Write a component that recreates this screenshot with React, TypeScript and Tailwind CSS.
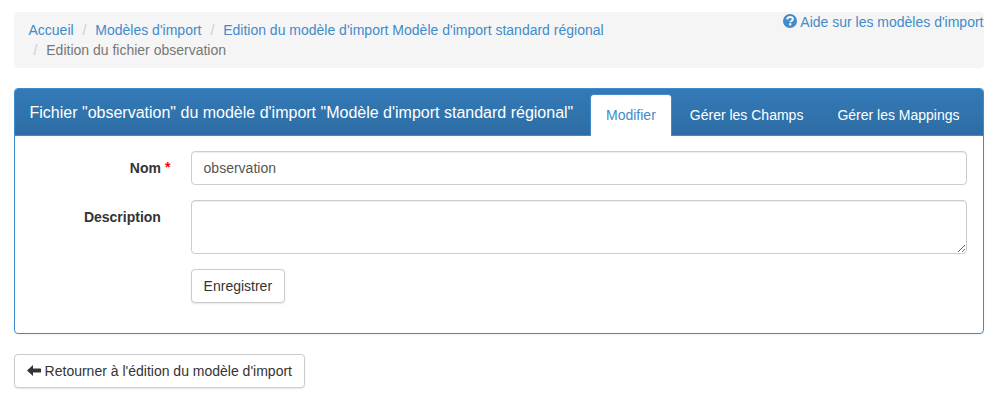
import React from "react";

const crumbs = [
  "Accueil",
  "Modèles d'import",
  "Edition du modèle d'import Modèle d'import standard régional",
];

function Separator() {
  return <span className="px-[5px] text-[#ccc]">{"/\u00a0"}</span>;
}

function HelpIcon() {
  return (
    <svg viewBox="0 0 14 14" className="mr-[3.5px] mt-[2px] h-3.5 w-3.5 shrink-0" aria-hidden="true">
      <circle cx="7" cy="7" r="7" fill="#428bca" />
      <path
        d="M4.2 5.6C4.2 3.8 5.4 3 7.1 3c1.6 0 2.8.8 2.8 2.1 0 1.8-2.5 1.6-2.5 3.2"
        fill="none"
        stroke="#f5f5f5"
        strokeWidth="2"
      />
      <rect x="6" y="9.2" width="2.4" height="2.2" fill="#f5f5f5" />
    </svg>
  );
}

function ArrowLeft() {
  return (
    <svg viewBox="0 0 14 14" className="mr-1 mt-[2px] h-3.5 w-3.5 shrink-0" aria-hidden="true">
      <path d="M0 7.5 6 2V5.6H13.5Q14 5.6 14 6.1V8.9Q14 9.4 13.5 9.4H6V13Z" fill="#333" />
    </svg>
  );
}

const button =
  "flex h-[34px] items-start rounded-[4px] border border-[#ccc] bg-white pl-[11.6px] pr-[12.4px] py-1.5 leading-5 text-[#333] shadow-[0_1px_2px_rgba(0,0,0,0.1)]";
const field =
  "block w-full rounded-[4px] border border-[#ccc] bg-white px-[11.6px] py-1.5 leading-5 text-[#555] shadow-[inset_0_1px_1px_rgba(0,0,0,0.075)] outline-none";
const label = "w-[145.9px] shrink-0 pt-[7px] text-right font-bold";

export default function App() {
  return (
    <div className="min-h-[408px] bg-white pl-3.5 pr-6 pt-3 font-['Liberation_Sans',Arial,sans-serif] text-[14px] leading-5 text-[#333]">
      <div className="relative mb-5 h-14 rounded-[4px] bg-[#f5f5f5] px-[14.5px] py-2">
        <div className="whitespace-nowrap">
          {crumbs.map((crumb, i) => (
            <React.Fragment key={crumb}>
              {i > 0 && <> <Separator /></>}
              <a href="#" className="text-[#428bca]">{crumb}</a>
            </React.Fragment>
          ))}
        </div>
        <div className="text-[#777]">
          <Separator />
          Edition du fichier observation
        </div>
        <a href="#" className="absolute right-[0.5px] top-0 flex whitespace-nowrap text-[#428bca]">
          <HelpIcon />
          Aide sur les modèles d'import
        </a>
      </div>

      <div className="mb-5 h-[246px] rounded-[4px] border border-[#428bca] bg-white shadow-[0_1px_2px_rgba(0,0,0,0.05)]">
        <div className="flex h-[47px] rounded-t-[3px] border-b border-[#428bca] bg-linear-to-b from-[#337ab7] to-[#2e6da4] pl-[14.5px] text-white">
          <h3 className="w-[560.5px] whitespace-nowrap pt-[15px] text-[16px] leading-[18px]">
            Fichier "observation" du modèle d'import "Modèle d'import standard régional"
          </h3>
          <nav className="flex whitespace-nowrap pt-[5px]">
            <a href="#" className="-mb-px rounded-t-[4px] border border-b-0 border-[#428bca] bg-white px-[15px] pt-2.5 text-[#428bca]">Modifier</a>
            <a href="#" className="ml-[3px] px-[15px] pt-[11px]">Gérer les Champs</a>
            <a href="#" className="ml-1 px-[15px] pt-[11px]">Gérer les Mappings</a>
          </nav>
        </div>
        <form className="flex flex-col gap-[15px] pr-4 pt-[15px]">
          <div className="flex">
            <label htmlFor="nom" className={label}>Nom</label>
            <span className="w-[30.1px] shrink-0 pl-[4.1px] pt-[6px] font-bold text-[#f00]">*</span>
            <input id="nom" defaultValue="observation" className={`${field} h-[34px]`} />
          </div>
          <div className="flex">
            <label htmlFor="description" className={`${label} mr-[30.1px]`}>Description</label>
            <textarea id="description" className={`${field} h-[54px] resize`} />
          </div>
          <div className="flex pl-44">
            <button type="button" className={button}>Enregistrer</button>
          </div>
        </form>
      </div>

      <div className="flex">
        <a href="#" className={button}>
          <ArrowLeft />
          Retourner à l'édition du modèle d'import
        </a>
      </div>
    </div>
  );
}
